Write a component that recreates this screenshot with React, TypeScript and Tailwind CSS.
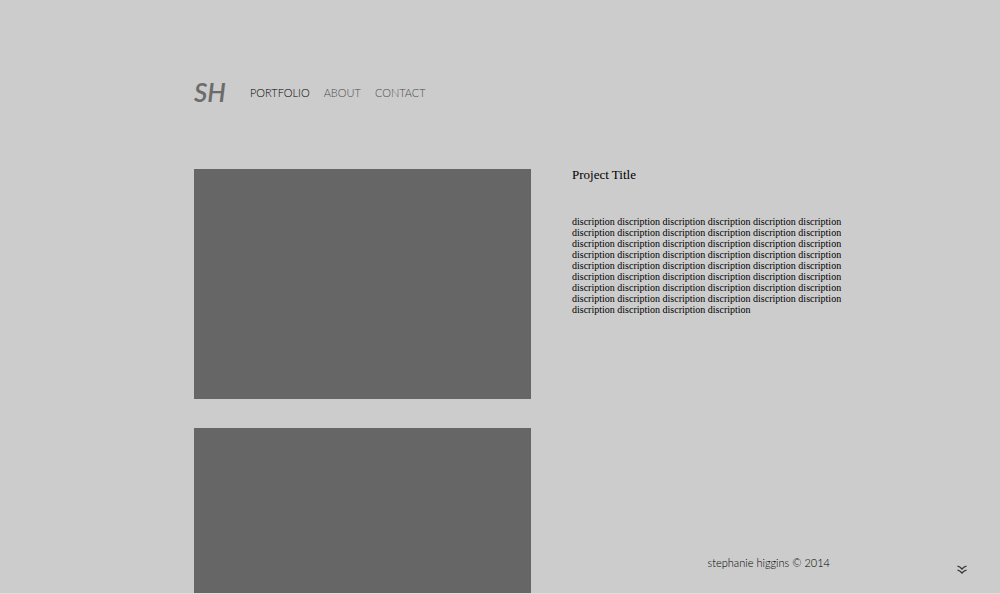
const description = Array(52).fill("discription").join(" ");

const links = [
  { label: "PORTFOLIO", href: "#portfolio", current: true },
  { label: "ABOUT", href: "#about", current: false },
  { label: "CONTACT", href: "#contact", current: false },
];

function Header() {
  return (
    <header className="flex items-center gap-6 pt-19">
      <a href="#home" className="text-[26px] leading-8 font-semibold italic text-[#6b6b6b]">
        SH
      </a>
      <nav aria-label="Main" className="flex gap-3.5 pt-0.5 text-[11px] leading-4 font-light">
        {links.map((link) => (
          <a
            key={link.label}
            href={link.href}
            aria-current={link.current ? "page" : undefined}
            className={link.current ? "text-black" : "text-[#4d4d4d]"}
          >
            {link.label}
          </a>
        ))}
      </nav>
    </header>
  );
}

function ScrollButton() {
  return (
    <button type="button" aria-label="Scroll down" className="fixed right-8 bottom-[19px] text-[#333333]">
      <svg width="12" height="10" viewBox="0 0 12 10" fill="none" stroke="currentColor" strokeWidth="1.3" className="block">
        <path d="M1.5 1.2C3 1.5 4.8 2.7 6 4C7.2 2.7 9 1.5 10.5 1.2" />
        <path d="M1.5 5.2C3 5.5 4.8 6.7 6 8C7.2 6.7 9 5.5 10.5 5.2" />
      </svg>
    </button>
  );
}

export default function App() {
  return (
    <div className="flex min-h-screen flex-col border-b border-[#dedede] bg-[#cccccc] pr-[17%] pl-[19.4%] font-['Lato',sans-serif]">
      <Header />
      <main className="grid flex-1 grid-cols-[337fr_258fr] gap-x-[41px] pt-[61px]">
        <section aria-label="Project images" className="flex flex-col gap-[29px]">
          <div className="h-[230px] bg-[#666666]" />
          <div className="min-h-40 flex-1 bg-[#666666]" />
        </section>
        <div className="flex flex-col">
          <article className="font-['Liberation_Serif',serif] text-black">
            <h1 className="text-[13px] leading-3">Project Title</h1>
            <p className="-mr-4 pt-[35px] text-[10px] leading-[11px]">{description}</p>
          </article>
          <footer className="mt-auto pb-[22px] text-right text-[11px] leading-4 font-light text-black">
            stephanie higgins © 2014
          </footer>
        </div>
      </main>
      <ScrollButton />
    </div>
  );
}
